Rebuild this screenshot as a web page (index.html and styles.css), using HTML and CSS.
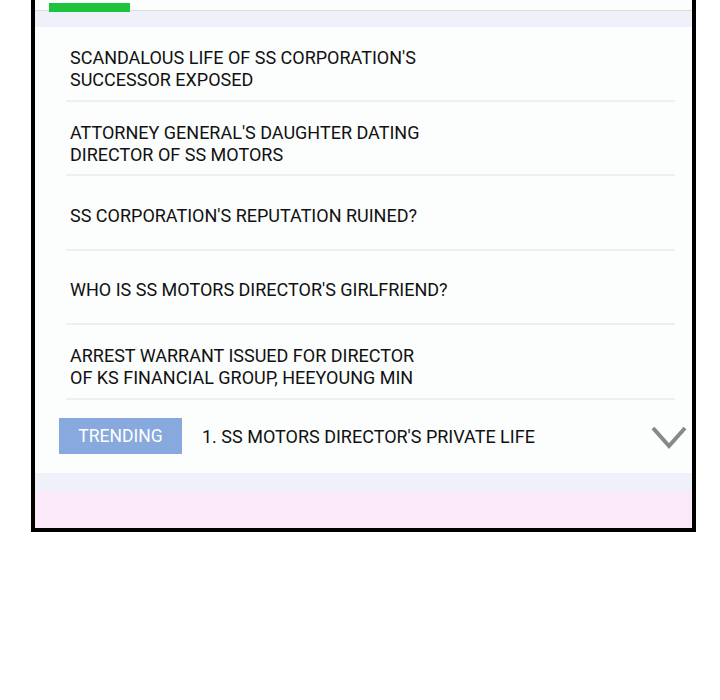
FILE: index.html
```html
<!DOCTYPE html>
<html>
<head>
<meta charset="utf-8">
<link rel="stylesheet" href="styles.css">
</head>
<body>
<div class="frame">
  <div class="tabs"><div class="tab-active"></div></div>
  <div class="band-top"></div>
  <div class="list">
    <div class="row"><p>SCANDALOUS LIFE OF SS CORPORATION'S<br>SUCCESSOR EXPOSED</p></div>
    <div class="row"><p>ATTORNEY GENERAL'S DAUGHTER DATING<br>DIRECTOR OF SS MOTORS</p></div>
    <div class="row single"><p>SS CORPORATION'S REPUTATION RUINED?</p></div>
    <div class="row single"><p>WHO IS SS MOTORS DIRECTOR'S GIRLFRIEND?</p></div>
    <div class="row"><p>ARREST WARRANT ISSUED FOR DIRECTOR<br>OF KS FINANCIAL GROUP, HEEYOUNG MIN</p></div>
    <div class="trending">
      <span class="badge">TRENDING</span>
      <span class="trend-text">1. SS MOTORS DIRECTOR'S PRIVATE LIFE</span>
      <svg class="chevron" width="36" height="24" viewBox="0 0 36 24"><polyline points="2,3 18,21 34,3" fill="none" stroke="#888888" stroke-width="4"/></svg>
    </div>
  </div>
  <div class="band-bottom"></div>
  <div class="band-pink"></div>
</div>
</body>
</html>
```

FILE: styles.css
```css
html, body {
  margin: 0;
  padding: 0;
  background: #ffffff;
}
body {
  font-family: Roboto, "Liberation Sans", sans-serif;
  color: #111111;
}
.frame {
  margin-left: 31px;
  width: 657px;
  border-left: 4px solid #000;
  border-right: 4px solid #000;
  border-bottom: 4px solid #000;
  background: #fcfdfd;
}
.tabs {
  height: 7px;
  padding-top: 3px;
  border-bottom: 1px solid #dcdcdc;
  padding-left: 14px;
  background: #fcfdfd;
}
.tab-active {
  position: relative;
  width: 81px;
  height: 9px;
  background: #1ec23c;
}
.band-top {
  height: 16px;
  background: #eef1fa;
}
.list {
  background: #fcfdfd;
  padding: 0 17px 0 31px;
}
.row {
  border-bottom: 2px solid #eef0f0;
  display: flex;
  align-items: center;
  padding-left: 4px;
  padding-top: 12px;
  height: 60.5px;
}
.row.single {
  padding-top: 7px;
  height: 65.5px;
}
.row p {
  margin: 0;
  font-size: 18px;
  line-height: 22px;
}
.trending {
  height: 73px;
  display: flex;
  align-items: center;
  margin-left: -7px;
  margin-right: -10px;
}
.badge {
  width: 123px;
  height: 36px;
  background: #87a9dd;
  color: #fff;
  font-size: 17.5px;
  display: flex;
  align-items: center;
  justify-content: center;
}
.trend-text {
  margin-left: 20px;
  font-size: 18px;
  flex: 1;
}
.chevron {
  display: block;
  margin-right: -2px;
  margin-top: 2px;
}
.band-bottom {
  height: 18px;
  background: #eef0fa;
}
.band-pink {
  height: 37px;
  background: #f9e9f9;
}
```
